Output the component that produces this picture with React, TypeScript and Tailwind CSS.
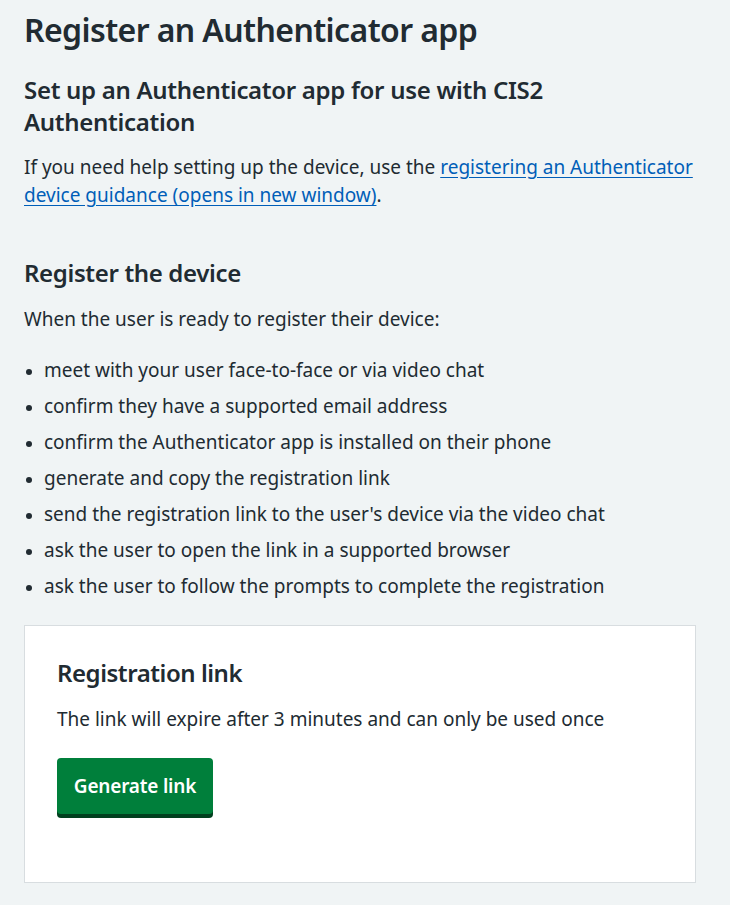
import React from "react";

const items = [
  "meet with your user face-to-face or via video chat",
  "confirm they have a supported email address",
  "confirm the Authenticator app is installed on their phone",
  "generate and copy the registration link",
  "send the registration link to the user's device via the video chat",
  "ask the user to open the link in a supported browser",
  "ask the user to follow the prompts to complete the registration",
];

export default function App() {
  return (
    <div
      className="min-h-[905px] bg-[#f0f4f5] text-[#212b32] px-6 pt-[10px] pb-6"
      style={{ fontFamily: '"Noto Sans", Arial, sans-serif' }}
    >
      <h1 className="text-[32px] leading-[40px] font-semibold tracking-[-0.6px] m-0">Register an Authenticator app</h1>
      <h2 className="mt-6 text-[24px] leading-[32px] font-semibold tracking-[-0.3px] w-[560px]">
        Set up an Authenticator app for use with CIS2 Authentication
      </h2>
      <p className="mt-[15px] text-[19px] leading-[28px]">
        If you need help setting up the device, use the{" "}
        <a href="#" className="text-[#005eb8] underline underline-offset-[3px]">
          registering an Authenticator device guidance (opens in new window)
        </a>
        .
      </p>
      <h2 className="mt-12 text-[24px] leading-[32px] font-semibold tracking-[-0.35px]">Register the device</h2>
      <p className="mt-4 text-[19px] leading-[28px]">When the user is ready to register their device:</p>
      <ul className="mt-[23px] flex flex-col gap-2 text-[19px] leading-[28px] list-disc pl-5 marker:text-[16px]">
        {items.map((t) => (
          <li key={t}>{t}</li>
        ))}
      </ul>
      <div className="mt-[25px] w-[672px] bg-white border border-[#d8dde0] px-8 pt-[31px] pb-[68px]">
        <h2 className="text-[24px] leading-[32px] font-semibold tracking-[-0.45px]">Registration link</h2>
        <p className="mt-4 text-[19px] leading-[28px]">
          The link will expire after 3 minutes and can only be used once
        </p>
        <button className="mt-[25px] h-[56px] w-[156px] rounded-[4px] bg-[#007f3b] text-white text-[19px] font-semibold tracking-[-0.2px] shadow-[0_4px_0_#00401e]">
          Generate link
        </button>
      </div>
    </div>
  );
}
